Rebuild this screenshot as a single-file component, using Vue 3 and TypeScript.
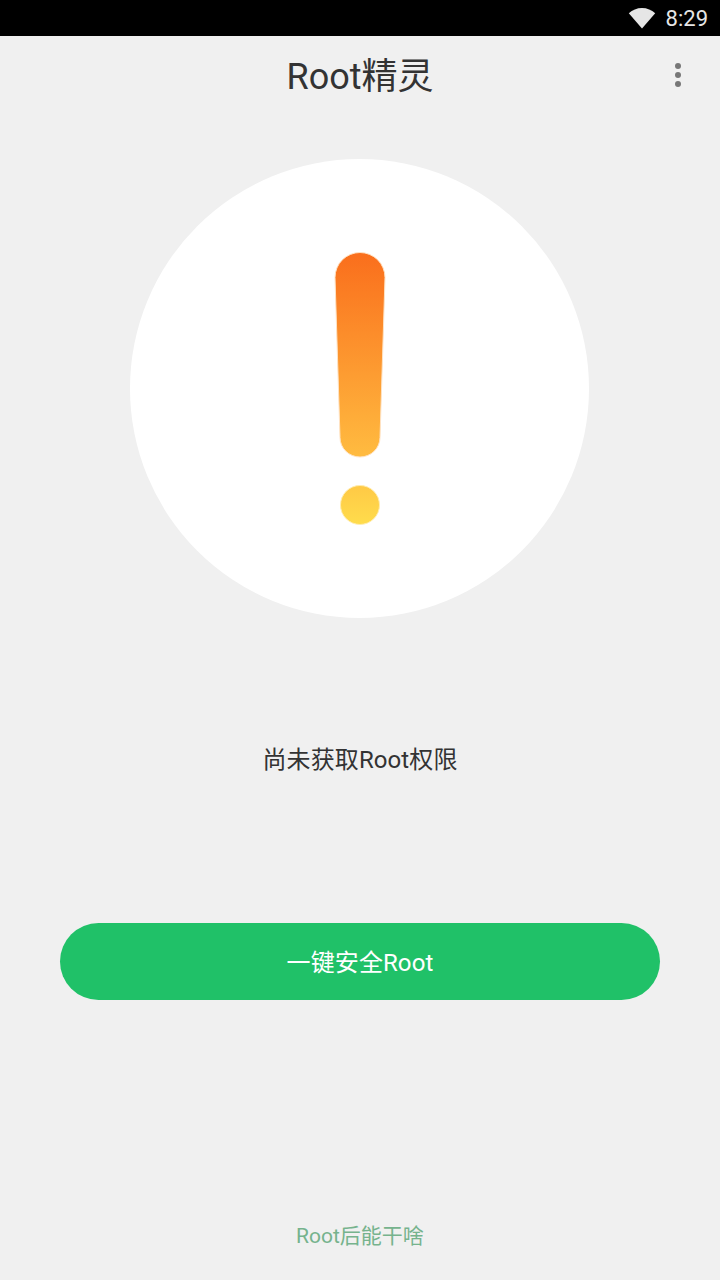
<template>
  <div class="page">
    <div class="status-bar">
      <svg class="wifi" width="28" height="22" viewBox="0 0 28 22">
        <path d="M14 21.500 0.800 6.200C4.400 3 9 1 14 1s9.600 2 13.200 5.200z" fill="#e6e6e6" />
      </svg>
      <span class="clock">8:29</span>
    </div>

    <header class="title-bar">
      <h1 class="title">Root精灵</h1>
      <div class="more">
        <i></i>
        <i></i>
        <i></i>
      </div>
    </header>

    <main class="content">
      <div class="circle">
        <svg width="60" height="280" viewBox="0 0 60 280">
          <defs>
            <linearGradient id="mark" gradientUnits="userSpaceOnUse" x1="0" y1="0" x2="0" y2="272">
              <stop offset="0" stop-color="#fa6e1c" />
              <stop offset="0.75" stop-color="#ffbb40" />
              <stop offset="1" stop-color="#ffdc4c" />
            </linearGradient>
          </defs>
          <path
            d="M5 25.500a25 25 0 0 1 50 0L50 185.500a20 19.500 0 0 1-40 0z"
            fill="url(#mark)"
            stroke="#ffe3c4"
            stroke-width="1"
          />
          <circle cx="30" cy="253" r="19.500" fill="url(#mark)" stroke="#ffedb0" stroke-width="1" />
        </svg>
      </div>
      <p class="state">{{ stateText }}</p>
      <button class="root-btn" type="button"><span>一键安全Root</span></button>
      <a class="help" href="#">Root后能干啥</a>
    </main>
  </div>
</template>

<script setup lang="ts">
const stateText = '尚未获取Root权限'
</script>

<style>
html,
body {
  margin: 0;
  background: #f0f0f0;
}
</style>

<style scoped>
.page {
  width: 720px;
  height: 1280px;
  display: flex;
  flex-direction: column;
  background: #f0f0f0;
  font-family: Roboto, "Noto Sans CJK SC", sans-serif;
  overflow: hidden;
}

.status-bar {
  height: 36px;
  flex: none;
  background: #000;
  display: flex;
  align-items: center;
  justify-content: flex-end;
  padding-right: 12px;
}

.wifi {
  margin-right: 10px;
  margin-top: -1px;
}

.clock {
  color: #e6e6e6;
  font-size: 22px;
  line-height: 36px;
  padding-top: 1px;
}

.title-bar {
  height: 80px;
  flex: none;
  position: relative;
  display: flex;
  align-items: center;
  justify-content: center;
}

.title {
  margin: -6px 0 0;
  font-size: 36px;
  font-weight: 400;
  color: #333;
}

.more {
  position: absolute;
  right: 39px;
  top: 27px;
  display: flex;
  flex-direction: column;
  gap: 3px;
}

.more i {
  width: 6px;
  height: 6px;
  border-radius: 50%;
  background: #777;
}

.content {
  flex: 1;
  display: flex;
  flex-direction: column;
  align-items: center;
}

.circle {
  width: 459px;
  height: 459px;
  margin: 43px 1px 0 0;
  border-radius: 50%;
  background: #fff;
  display: flex;
  justify-content: center;
  padding: 93px 0 0 1px;
  box-sizing: border-box;
}

.state {
  margin: 122px 0 0;
  font-size: 24px;
  line-height: 40px;
  letter-spacing: 0.1px;
  color: #333;
}

.root-btn {
  width: 600px;
  height: 77px;
  margin-top: 143px;
  border: none;
  border-radius: 39px;
  background: #20c168;
  color: #fff;
  font-family: inherit;
  font-size: 24px;
  letter-spacing: 0.1px;
}

.root-btn span {
  display: block;
  margin-top: -2px;
}

.help {
  margin-top: 216px;
  font-size: 21px;
  line-height: 40px;
  color: #76b38d;
  text-decoration: none;
}
</style>
